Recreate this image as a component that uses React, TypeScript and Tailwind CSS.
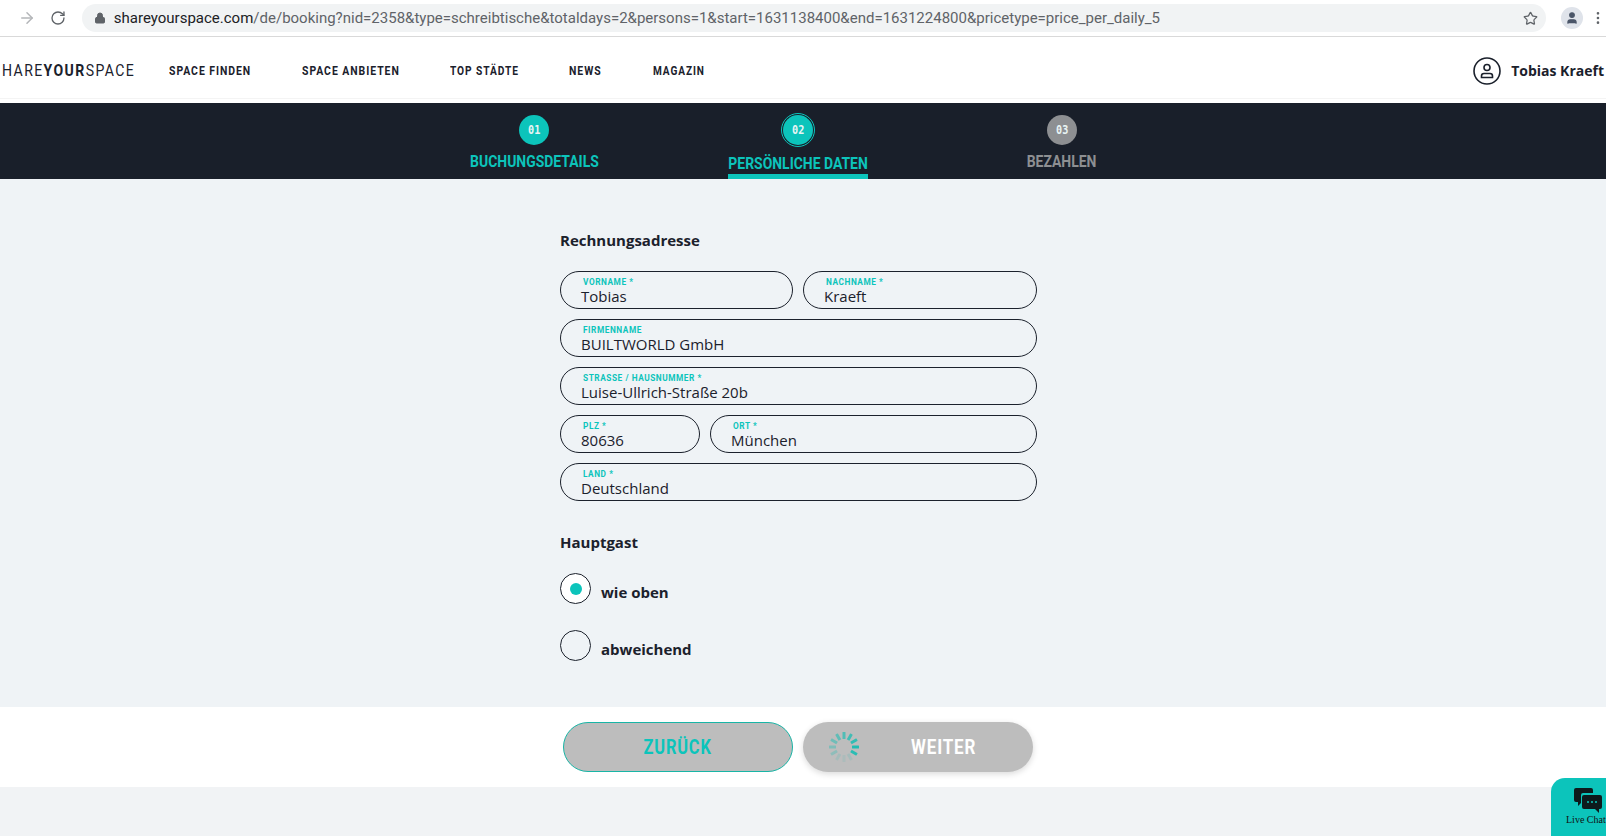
import { ArrowLeft, ArrowRight, RotateCw, Lock, Star, User, MoreVertical } from "lucide-react";

const din = "font-['Roboto',sans-serif]";

function Field({ label, value, className }: { label: string; value: string; className: string }) {
  return (
    <div className={`h-[38px] rounded-[19px] border border-[#1b212c] pl-[20px] pr-4 pt-[5px] ${className}`}>
      <div className={`ml-[1.5px] origin-left scale-x-[0.92] whitespace-nowrap text-[9px] leading-[11px] font-bold tracking-[0.6px] text-[#0cc4bb] ${din}`}>{label}</div>
      <div className="-mt-[1px] text-[15px] leading-[19px] text-[#1b212c]">{value}</div>
    </div>
  );
}

function Step({ n, label, color, active, width }: { n: string; label: string; color: string; active?: boolean; width: string }) {
  return (
    <div className="flex w-[264px] flex-col items-center">
      <div className={`mt-[10px] flex h-[34px] w-[34px] shrink-0 items-center justify-center rounded-full ${active ? "border border-[#0cc4bb]" : ""}`}>
        <div className="flex h-[30px] w-[30px] shrink-0 items-center justify-center rounded-full" style={{ backgroundColor: color }}>
          <span className="scale-x-[0.85] font-['DejaVu_Sans_Mono',monospace] text-[12px] font-bold text-[#e8f4f4]">{n}</span>
        </div>
      </div>
      <div className={`${active ? "mt-[6px] h-[26px] border-b-[5px] border-[#0cc4bb]" : "mt-[4px]"} ${width} flex shrink-0 justify-center ${din} text-[17px] leading-[20px] font-bold`} style={{ color }}>
        <span className="scale-x-[0.82] whitespace-nowrap">{label}</span>
      </div>
    </div>
  );
}

function NavItem({ label, className }: { label: string; className: string }) {
  return (
    <span className={`${className} origin-left whitespace-nowrap`}>{label}</span>
  );
}

function Spinner() {
  const bars = Array.from({ length: 12 }, (_, i) => i);
  return (
    <svg width="32" height="32" viewBox="-16 -16 32 32">
      {bars.map((i) => (
        <rect
          key={i}
          x="-1.5"
          y="-15"
          width="3"
          height="7"
          rx="0.5"
          fill="#22bdb3"
          opacity={[0.7, 0.8, 0.9, 1, 0.95, 0.15, 0.1, 0.15, 0.3, 0.4, 0.5, 0.6][i]}
          transform={`rotate(${i * 30})`}
        />
      ))}
    </svg>
  );
}

export default function App() {
  return (
    <div className="relative flex h-[836px] w-[1606px] flex-col overflow-hidden bg-[#f1f3f5] font-['Open_Sans',sans-serif]">
      {/* browser chrome */}
      <div className="flex h-[37px] shrink-0 items-center border-b border-[#d9d9d9] bg-white">
        <ArrowLeft className="-ml-[15px] h-[18px] w-[18px] text-[#5f6368]" />
        <ArrowRight className="ml-[15px] h-[18px] w-[18px] text-[#b4b6b9]" />
        <RotateCw className="ml-[14px] h-[16px] w-[16px] text-[#5f6368]" />
        <div className="ml-[16px] flex h-[28px] w-[1469px] items-center rounded-full bg-[#f1f3f4] pl-[12px] pr-[8px] font-['Roboto',sans-serif] text-[15px] text-[#5f6368]">
          <Lock className="h-[12px] w-[12px] fill-[#5f6368]" />
          <span className="ml-[8px] whitespace-nowrap"><span className="text-[#202124]">shareyourspace.com</span>/de/booking?nid=2358&amp;type=schreibtische&amp;totaldays=2&amp;persons=1&amp;start=1631138400&amp;end=1631224800&amp;pricetype=price_per_daily_5</span>
          <Star className="ml-auto h-[15px] w-[15px] text-[#5f6368]" />
        </div>
        <div className="ml-[15px] flex h-[22px] w-[22px] items-center justify-center rounded-full bg-[#dfe3ea]">
          <User className="h-[14px] w-[14px] fill-[#4a5568] text-[#4a5568]" />
        </div>
        <MoreVertical className="ml-[7px] h-[16px] w-[16px] text-[#5f6368]" />
      </div>

      {/* site nav */}
      <div className="h-[66px] shrink-0 bg-white">
        <div className="flex h-[62px] items-center border-b border-[#f4f4f4] pt-[7px]">
          <div className={`ml-[2px] w-[167px] origin-left scale-x-[0.827] whitespace-nowrap ${din} text-[17px] tracking-[1.7px] text-[#1b212c]`}>
            HARE<span className="font-bold">YOUR</span>SPACE
          </div>
          <nav className={`flex items-center gap-[51px] ${din} text-[12px] font-bold tracking-[1.1px] text-[#1b212c]`}>
            <NavItem label="SPACE FINDEN" className="w-[82px] scale-x-[0.87]" />
            <NavItem label="SPACE ANBIETEN" className="w-[97px] scale-x-[0.87]" />
            <NavItem label="TOP STÄDTE" className="w-[68px] scale-x-[0.85]" />
            <NavItem label="NEWS" className="w-[33px] scale-x-[0.87]" />
            <NavItem label="MAGAZIN" className="w-[51px] scale-x-[0.84]" />
          </nav>
          <div className="ml-auto flex items-center gap-[10px] whitespace-nowrap pr-[2px]">
            <svg width="28" height="28" viewBox="0 0 28 28" fill="none" stroke="#1b212c" strokeWidth="1.6">
              <circle cx="14" cy="14" r="13" />
              <circle cx="14" cy="10.5" r="3" />
              <path d="M8.5 20.5v-1.5a2.5 2.5 0 0 1 2.5-2.5h6a2.5 2.5 0 0 1 2.5 2.5v1.5z" />
            </svg>
            <span className="pb-[2px] text-[14px] font-bold text-[#1b212c]">Tobias Kraeft</span>
          </div>
        </div>
      </div>

      {/* steps */}
      <div className="flex h-[76px] shrink-0 justify-start bg-[#191f2a] pl-[402px]">
        <Step n="01" label="BUCHUNGSDETAILS" color="#0cc4bb" width="w-[128px]" />
        <Step n="02" label="PERSÖNLICHE DATEN" color="#0cc4bb" active width="w-[140px]" />
        <Step n="03" label="BEZAHLEN" color="#8d8f92" width="w-[71px]" />
      </div>

      {/* form */}
      <div className="h-[528px] shrink-0 bg-[#eff3f6] pl-[560px] pt-[50px] text-[#1b212c]">
        <div className="w-[477px]">
          <h2 className="text-[15px] leading-[22px] font-bold">Rechnungsadresse</h2>
          <div className="mt-[20px] flex flex-col gap-[10px]">
            <div className="flex gap-[10px]">
              <Field label="VORNAME *" value="Tobias" className="w-[233px]" />
              <Field label="NACHNAME *" value="Kraeft" className="w-[234px]" />
            </div>
            <Field label="FIRMENNAME" value="BUILTWORLD GmbH" className="w-full" />
            <Field label="STRASSE / HAUSNUMMER *" value="Luise-Ullrich-Straße 20b" className="w-full" />
            <div className="flex gap-[10px]">
              <Field label="PLZ *" value="80636" className="w-[140px]" />
              <Field label="ORT *" value="München" className="w-[327px]" />
            </div>
            <Field label="LAND *" value="Deutschland" className="w-full" />
          </div>
          <h2 className="mt-[30px] text-[15px] leading-[22px] font-bold">Hauptgast</h2>
          <div className="mt-[20px] flex h-[31px] items-center gap-[10px]">
            <div className="flex h-[31px] w-[31px] items-center justify-center rounded-full border border-[#1b212c] bg-white">
              <div className="h-[12px] w-[12px] rounded-full bg-[#0cc4bb]" />
            </div>
            <span className="pt-[8px] text-[15px] font-bold">wie oben</span>
          </div>
          <div className="mt-[26px] flex h-[31px] items-center gap-[10px]">
            <div className="h-[31px] w-[31px] rounded-full border border-[#1b212c]" />
            <span className="pt-[7px] text-[15px] font-bold">abweichend</span>
          </div>
        </div>
      </div>

      {/* footer buttons */}
      <div className="flex h-[80px] shrink-0 items-center gap-[10px] bg-white pl-[563px]">
        <div className={`flex h-[50px] w-[230px] items-center justify-center rounded-[25px] border border-[#18b5a6] bg-[#bdbdbd] ${din} text-[20px] font-bold tracking-[1px] text-[#0cc4bb]`}>
          <span className="scale-x-[0.82]">ZURÜCK</span>
        </div>
        <div className={`flex h-[50px] w-[230px] items-center rounded-[25px] bg-[#bdbdbd] pl-[25px] shadow-[0_2px_6px_rgba(0,0,0,0.15)] ${din} text-[20px] font-bold tracking-[1px] text-white`}>
          <Spinner />
          <span className="ml-[51px] origin-left scale-x-[0.85]">WEITER</span>
        </div>
      </div>

      {/* live chat */}
      <div className="absolute left-[1551px] top-[778px] h-[58px] w-[70px] rounded-tl-[14px] bg-[#0cc4bb] font-['Liberation_Serif',serif] text-[10px] text-[#111]">
        <svg className="absolute left-[23px] top-[9px]" width="28" height="26" viewBox="0 0 28 26">
          <path d="M2 1h15a2 2 0 0 1 2 2v3H9a2 2 0 0 0-2 2v8l-3 3v-4H2a2 2 0 0 1-2-2V3a2 2 0 0 1 2-2z" fill="#0d1a1c" />
          <path d="M10 8h16a2 2 0 0 1 2 2v10a2 2 0 0 1-2 2h-1v4l-4-4H10a2 2 0 0 1-2-2V10a2 2 0 0 1 2-2z" fill="#0d1a1c" />
          <circle cx="14" cy="15" r="1" fill="#0cc4bb" />
          <circle cx="18" cy="15" r="1" fill="#0cc4bb" />
          <circle cx="22" cy="15" r="1" fill="#0cc4bb" />
        </svg>
        <span className="absolute left-[15px] top-[34px] whitespace-nowrap">Live Chat</span>
      </div>
    </div>
  );
}
